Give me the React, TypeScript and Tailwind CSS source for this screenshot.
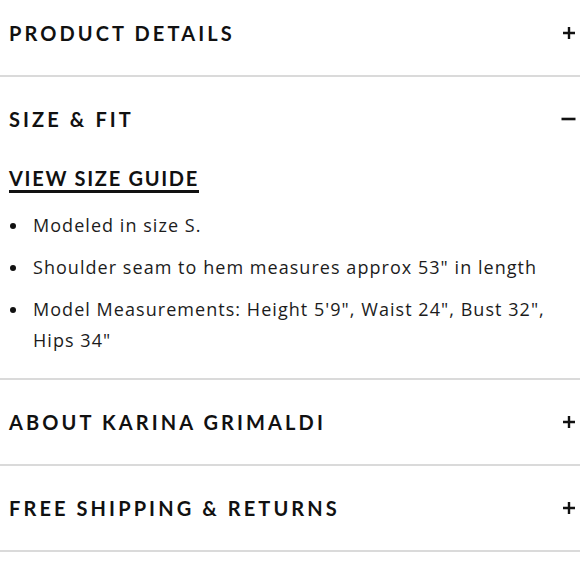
const sections = [
  { title: "PRODUCT DETAILS", open: false },
  { title: "SIZE & FIT", open: true },
  { title: "ABOUT KARINA GRIMALDI", open: false },
  { title: "FREE SHIPPING & RETURNS", open: false },
];

const details = [
  "Modeled in size S.",
  'Shoulder seam to hem measures approx 53" in length',
  'Model Measurements: Height 5\'9", Waist 24", Bust 32", Hips 34"',
];

const Plus = () => (
  <svg width="14" height="14" viewBox="0 0 14 14" className="shrink-0">
    <path d="M7 1v12M1 7h12" stroke="#111" strokeWidth="2.4" />
  </svg>
);

const Minus = () => (
  <svg width="15" height="14" viewBox="0 0 15 14" className="shrink-0">
    <path d="M0.5 7h14" stroke="#111" strokeWidth="2.6" />
  </svg>
);

const SizeFit = () => (
  <div className="pt-[35px] pb-[22px] pl-[9px] pr-4">
    <a className="inline-block text-[20px] leading-[24px] font-bold tracking-[0.085em] text-[#111] border-b-[3px] border-[#111] font-['Lato',sans-serif]">
      VIEW SIZE GUIDE
    </a>
    <ul className="mt-[17px] flex flex-col gap-[11px] font-['Open_Sans',sans-serif] text-[18px] leading-[31px] tracking-[0.058em] text-[#1c1c1c]">
      {details.map((d) => (
        <li key={d} className="flex">
          <span className="w-6 shrink-0 flex items-start pt-[13px] pl-[1px]">
            <span className="block w-[6px] h-[6px] rounded-full bg-[#111]" />
          </span>
          <span>{d}</span>
        </li>
      ))}
    </ul>
  </div>
);

export default function App() {
  return (
    <div className="w-[580px] h-[580px] overflow-hidden bg-white">
      <div className="-mt-[9px]">
        {sections.map((s) => (
          <div key={s.title} className="border-b-2 border-[#dadada]">
            <div className={`flex items-center justify-between pl-[9px] pr-[4px] pt-[30px] ${s.open ? "" : "pb-[30px]"}`}>
              <h3 className="text-[20px] leading-[24px] font-bold tracking-[0.155em] text-[#111] font-['Lato',sans-serif]">
                {s.title}
              </h3>
              {s.open ? <Minus /> : <Plus />}
            </div>
            {s.open && <SizeFit />}
          </div>
        ))}
      </div>
    </div>
  );
}
